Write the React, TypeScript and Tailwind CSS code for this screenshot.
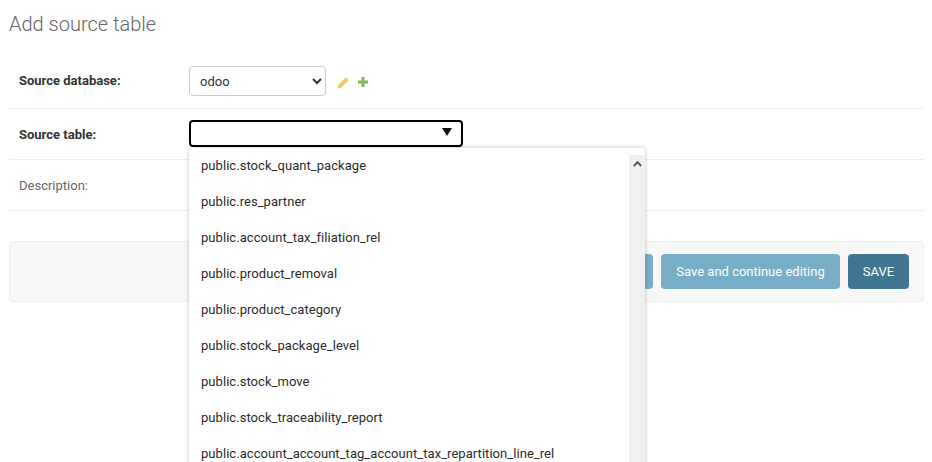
import React from 'react';

const tables = [
    'public.stock_quant_package',
    'public.res_partner',
    'public.account_tax_filiation_rel',
    'public.product_removal',
    'public.product_category',
    'public.stock_package_level',
    'public.stock_move',
    'public.stock_traceability_report',
    'public.account_account_tag_account_tax_repartition_line_rel',
];

function App() {
    return (
        <div className="relative h-[462px] w-[932px] overflow-hidden bg-white font-['Roboto',sans-serif] text-[14px] text-[#333]">
            <div className="pl-[9px] pr-[8px]">
                <h1 className="pt-[12px] text-[20px] font-light leading-[24px] text-[#666]">Add source table</h1>

                <div className="mt-[20px]">
                    <div className="flex h-[53px] items-center border-b border-[#eeeeee] pl-[10px] pb-[2px]">
                        <label className="w-[170px] text-[13px] font-bold text-[#333]">Source database:</label>
                        <select className="h-[30px] w-[137px] rounded-[4px] border border-[#cccccc] bg-white pl-[6px] text-[13px] text-[#333]">
                            <option>odoo</option>
                        </select>
                        <svg className="ml-[11px] mt-[3px]" width="12" height="12" viewBox="0 0 12 12">
                            <path d="M8.8 0.3 L11.8 3.2 L4.4 10.6 L0.3 11.8 L1.4 7.7 Z" fill="#f2cb57" />
                            <path d="M7.6 2 L10.2 4.6 M5.4 4 L7.8 6.4" stroke="#fbe7a6" strokeWidth="0.5" />
                        </svg>
                        <svg className="ml-[9px] mt-[2px]" width="10" height="10" viewBox="0 0 10 10">
                            <path d="M3.5 0 H6.5 V3.5 H10 V6.5 H6.5 V10 H3.5 V6.5 H0 V3.5 H3.5 Z" fill="#80bb58" />
                        </svg>
                    </div>

                    <div className="flex h-[51px] items-center border-b border-[#eeeeee] pl-[10px]">
                        <label className="mt-[1px] w-[170px] text-[13px] font-bold text-[#333]">Source table:</label>
                        <div className="mb-[2px] flex h-[27px] w-[274px] items-center justify-end rounded-[4px] border-2 border-black bg-white pr-[9px]">
                            <svg width="10" height="8" viewBox="0 0 10 8" className="mb-[2px]">
                                <path d="M0 0 H10 L5 8 Z" fill="#111" />
                            </svg>
                        </div>
                    </div>

                    <div className="flex h-[51px] items-center border-b border-[#eeeeee] pl-[10px]">
                        <label className="mt-[1px] w-[170px] text-[13px] text-[#666]">Description:</label>
                    </div>
                </div>

                <div className="mt-[30px] flex h-[61px] items-center justify-end gap-[8px] rounded-[4px] border border-[#eeeeee] bg-[#f8f8f8] pr-[14px]">
                    <button className="flex h-[35px] w-[170px] items-center justify-center rounded-[4px] bg-[#79aec8] text-[13px] text-white">Save and add another</button>
                    <button className="flex h-[35px] w-[179px] items-center justify-center rounded-[4px] bg-[#79aec8] text-[13px] text-white">Save and continue editing</button>
                    <button className="flex h-[35px] w-[61px] items-center justify-center rounded-[4px] bg-[#417690] text-[13px] text-white">SAVE</button>
                </div>
            </div>

            {/* open combobox list, sits over the form */}
            <div className="absolute left-[189px] top-[148px] flex h-[330px] w-[456px] rounded-[4px] bg-white shadow-[0_0_4px_rgba(0,0,0,0.25)]">
                <ul className="flex-1 text-[13px] tracking-[0.05px] text-[#2b2b2b]">
                    {tables.map((t) => (
                        <li key={t} className="flex h-[36px] items-center pl-[12px] leading-[20px]">{t}</li>
                    ))}
                </ul>
                <div className="mt-[7px] flex w-[16px] justify-center bg-[#f0f0f0] pt-[6px]">
                    <svg width="9" height="6" viewBox="0 0 9 6">
                        <path d="M0.8 5 L4.5 1.2 L8.2 5" fill="none" stroke="#505050" strokeWidth="1.8" />
                    </svg>
                </div>
            </div>
        </div>
    );
}

export default App;
